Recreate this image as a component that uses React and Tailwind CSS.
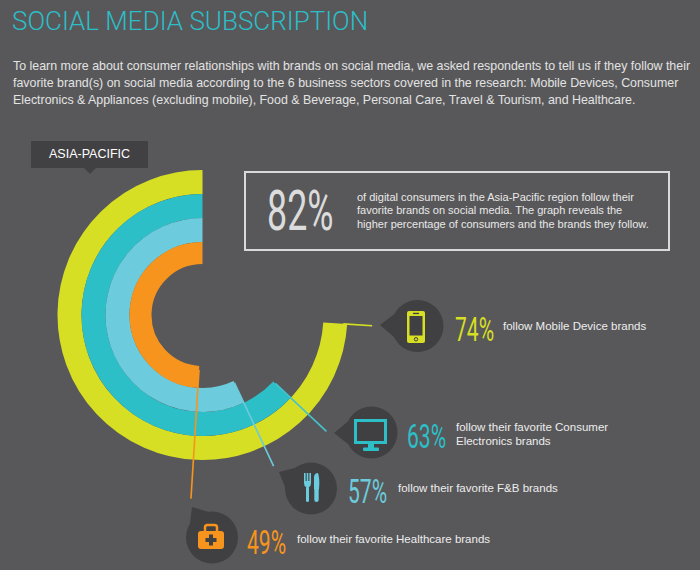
import React from "react";

const CX = 202.5;
const CY = 315;
const YEL = "#d6df23";
const TEAL = "#2cbfc7";
const LBLUE = "#6ccbdc";
const ORANGE = "#f7941d";
const DARK = "#404042";

function pt(r, deg) {
  const a = (deg * Math.PI) / 180;
  return [CX - r * Math.sin(a), CY - r * Math.cos(a)];
}
function arc(r, deg) {
  const [x, y] = pt(r, deg);
  return `M ${CX} ${CY - r} A ${r} ${r} 0 ${deg > 180 ? 1 : 0} 0 ${x} ${y}`;
}
function Leader({ r1, r2, deg, color }) {
  const [x1, y1] = pt(r1, deg);
  const [x2, y2] = pt(r2, deg);
  return <line x1={x1} y1={y1} x2={x2} y2={y2} stroke={color} strokeWidth="1.6" />;
}
function Bubble({ bx, by, tx, ty }) {
  const phi = Math.atan2(ty - by, tx - bx);
  const p1 = [bx + 24 * Math.cos(phi + 0.7), by + 24 * Math.sin(phi + 0.7)];
  const p2 = [bx + 24 * Math.cos(phi - 0.7), by + 24 * Math.sin(phi - 0.7)];
  return (
    <g fill={DARK}>
      <polygon points={`${tx},${ty} ${p1[0]},${p1[1]} ${p2[0]},${p2[1]}`} />
      <circle cx={bx} cy={by} r="26" />
    </g>
  );
}

const bands = [
  { r: 133, w: 24, c: YEL, deg: 266.4 },
  { r: 109, w: 24, c: TEAL, deg: 226.8 },
  { r: 85, w: 24, c: LBLUE, deg: 205.2 },
  { r: 62, w: 22, c: ORANGE, deg: 176.4 },
];

function Chart() {
  return (
    <svg
      className="absolute left-0 top-0 pointer-events-none"
      width="700"
      height="440"
      viewBox="0 130 700 440"
    >
      {bands.map((b) => (
        <path key={b.c} d={arc(b.r, b.deg)} fill="none" stroke={b.c} strokeWidth={b.w} />
      ))}
      <Leader r1={141} r2={170} deg={266.4} color={YEL} />
      <Leader r1={100} r2={170} deg={226.8} color="#45c3cd" />
      <Leader r1={75} r2={167} deg={205.2} color={LBLUE} />
      <Leader r1={55} r2={184} deg={176.4} color={ORANGE} />

      <Bubble bx={417.5} by={326} tx={380} ty={325} />
      <Bubble bx={371.5} by={432.5} tx={334} ty={433} />
      <Bubble bx={311} by={488.5} tx={279} ty={472} />
      <Bubble bx={212} by={537.5} tx={192} ty={507} />

      {/* phone */}
      <rect x="407" y="311" width="18" height="32" rx="2" fill={YEL} />
      <rect x="409.5" y="316" width="13" height="19.5" fill={DARK} />
      <rect x="413" y="312.8" width="6" height="1.3" fill={DARK} />
      <circle cx="416" cy="339.3" r="1.7" fill="none" stroke={DARK} strokeWidth="1" />

      {/* monitor */}
      <rect x="355.5" y="420.5" width="30" height="22" fill="none" stroke={TEAL} strokeWidth="3" />
      <rect x="368" y="443" width="6" height="5" fill={TEAL} />
      <rect x="363" y="447.5" width="16" height="3.5" rx="1" fill={TEAL} />

      {/* fork & knife */}
      <g fill={LBLUE}>
        <rect x="304" y="473" width="1.6" height="9" />
        <rect x="306.7" y="473" width="1.6" height="9" />
        <rect x="309.4" y="473" width="1.6" height="9" />
        <path d="M304 481 L311 481 L311 483 Q311 486 309 487 L306 487 Q304 486 304 483 Z" />
        <rect x="306" y="486" width="3" height="16" rx="1.5" />
        <path d="M314 489 L314 477 Q314.5 473 318 473 Q320 479 319 489 Z" />
        <rect x="314.3" y="487" width="4.4" height="15" rx="2.2" />
      </g>

      {/* first aid kit */}
      <rect x="205" y="525" width="12" height="10" rx="2.5" fill="none" stroke={ORANGE} strokeWidth="2.5" />
      <rect x="198" y="531" width="26" height="18" rx="3" fill={ORANGE} />
      <rect x="209" y="534.5" width="4" height="11" fill={DARK} />
      <rect x="205.5" y="538" width="11" height="4" fill={DARK} />
    </svg>
  );
}

const pctFont = "font-['Roboto',sans-serif]";
const txtFont = "font-['Liberation_Sans',Arial,sans-serif]";

function Node({ className, pctClass, pct, textClass, children }) {
  return (
    <div className={`absolute flex items-start ${className}`}>
      <div className="w-[40px] shrink-0">
        <span
          className={`inline-block origin-left scale-x-[0.62] text-[34px] leading-[34px] whitespace-nowrap font-normal ${pctFont} ${pctClass}`}
        >
          {pct}
        </span>
      </div>
      <p className={`text-[11.5px] leading-[13.5px] whitespace-nowrap text-[#ededed] ${txtFont} ${textClass}`}>
        {children}
      </p>
    </div>
  );
}

export default function App() {
  return (
    <div className="w-[700px] h-[570px] bg-[#58585a] overflow-hidden flex flex-col">
      <h1 className={`pt-[8px] pl-[12px] text-[26px] leading-[26px] text-[#2cbec7] font-light ${pctFont} whitespace-nowrap`}>
        SOCIAL MEDIA SUBSCRIPTION
      </h1>
      <p className={`mt-[24px] pl-[13px] text-[12.4px] leading-[17px] text-[#e3e3e3] ${txtFont} whitespace-nowrap`}>
        To learn more about consumer relationships with brands on social media, we asked respondents to tell us if they follow their
        <br />
        favorite brand(s) on social media according to the 6 business sectors covered in the research: Mobile Devices, Consumer
        <br />
        Electronics &amp; Appliances (excluding mobile), Food &amp; Beverage, Personal Care, Travel &amp; Tourism, and Healthcare.
      </p>

      <div className="relative mt-[21px] h-[440px]">
        <Chart />

        <div className="relative ml-[31px] mt-[11px] w-[117px] h-[27px] bg-[#414143] flex items-center justify-center">
          <span className={`text-[12.5px] text-white ${txtFont}`}>ASIA-PACIFIC</span>
          <span className="absolute left-[53px] top-[27px] w-0 h-0 border-l-[6px] border-r-[6px] border-t-[6px] border-l-transparent border-r-transparent border-t-[#414143]" />
        </div>

        <div className="ml-[244px] mt-[3px] w-[426px] h-[80px] border-2 border-[#d9d9d9] flex items-center pl-[21px]">
          <div className="w-[68px] shrink-0">
            <span className={`inline-block origin-left scale-x-[0.64] text-[56px] leading-[56px] text-[#dcdcdc] font-normal ${pctFont}`}>
              82%
            </span>
          </div>
          <p className={`ml-[22px] text-[11px] leading-[13.3px] text-[#e8e8e8] ${txtFont} whitespace-nowrap`}>
            of digital consumers in the Asia-Pacific region follow their
            <br />
            favorite brands on social media. The graph reveals the
            <br />
            higher percentage of consumers and the brands they follow.
          </p>
        </div>

        <Node className="left-[455px] top-[182px]" pctClass="text-[#d6df23]" pct="74%" textClass="ml-[8px] mt-[8px]">
          follow Mobile Device brands
        </Node>
        <Node className="left-[407px] top-[289px]" pctClass="text-[#2cbfc7]" pct="63%" textClass="ml-[9px] mt-[2px]">
          follow their favorite Consumer
          <br />
          Electronics brands
        </Node>
        <Node className="left-[348px] top-[344px]" pctClass="text-[#6ccbdc]" pct="57%" textClass="ml-[10px] mt-[8px]">
          follow their favorite F&amp;B brands
        </Node>
        <Node className="left-[247px] top-[395px]" pctClass="text-[#f7941d]" pct="49%" textClass="ml-[10px] mt-[8px]">
          follow their favorite Healthcare brands
        </Node>
      </div>
    </div>
  );
}
